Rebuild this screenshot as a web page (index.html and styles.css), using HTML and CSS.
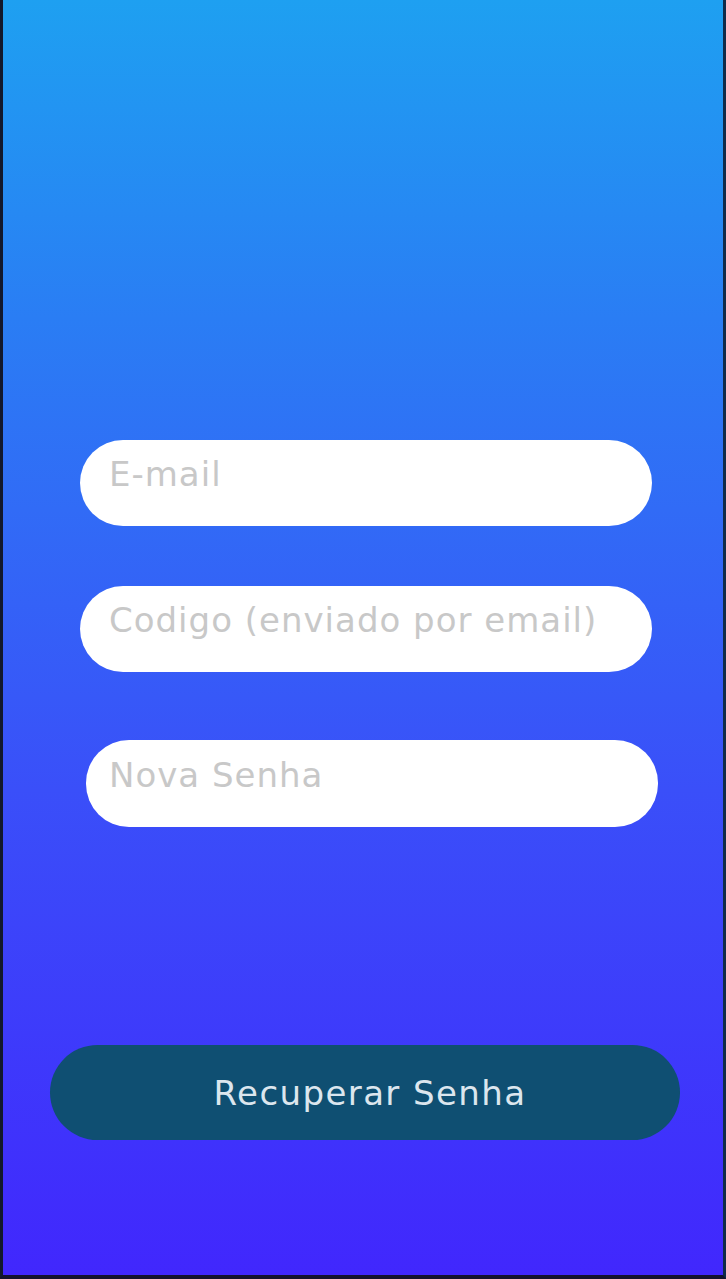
FILE: index.html
```html
<!DOCTYPE html>
<html lang="pt-BR">
<head>
<meta charset="utf-8">
<title>Recuperar Senha</title>
<link rel="stylesheet" href="styles.css">
</head>
<body>
<div class="screen">
  <form class="form">
    <input class="field field-email" type="email" placeholder="E-mail">
    <input class="field field-code" type="text" placeholder="Codigo (enviado por email)">
    <input class="field field-pass" type="password" placeholder="Nova Senha">
    <button class="btn" type="button">Recuperar Senha</button>
  </form>
</div>
</body>
</html>
```

FILE: styles.css
```css
html, body {
  margin: 0;
  padding: 0;
  background: #14142a;
}
.screen {
  box-sizing: border-box;
  width: 726px;
  height: 1279px;
  border-left: 3px solid #12182c;
  border-right: 3px solid #0f2a4a;
  border-bottom: 4px solid #14122e;
  background: linear-gradient(180deg, #1ea0f1 0%, #2a7df4 25%, #316bf6 40%, #3a4ff9 62%, #4127fd 100%);
  font-family: "DejaVu Sans", sans-serif;
}
.form {
  display: flex;
  flex-direction: column;
  align-items: flex-start;
  padding-top: 440px;
  margin: 0;
}
.field {
  box-sizing: border-box;
  width: 572px;
  height: 86px;
  border: none;
  outline: none;
  border-radius: 43px;
  background: #ffffff;
  padding: 14px 20px 32px 29px;
  font-family: "DejaVu Sans", sans-serif;
  font-size: 34px;
  letter-spacing: 1px;
  line-height: 40px;
  color: #333;
  margin-left: 77px;
}
.field::placeholder {
  color: #c8c8c8;
}
.field-code {
  margin-top: 60px;
}
.field-pass {
  margin-top: 68px;
  margin-left: 83px;
  padding-left: 23px;
  height: 87px;
}
.btn {
  box-sizing: border-box;
  margin-top: 218px;
  margin-left: 47px;
  width: 630px;
  height: 95px;
  border: none;
  border-radius: 48px;
  background: #0f4f72;
  color: #dce6ee;
  font-family: "DejaVu Sans", sans-serif;
  font-size: 34px;
  letter-spacing: 1.4px;
  line-height: 40px;
  padding: 0 0 0 10px;
  cursor: pointer;
}
```
